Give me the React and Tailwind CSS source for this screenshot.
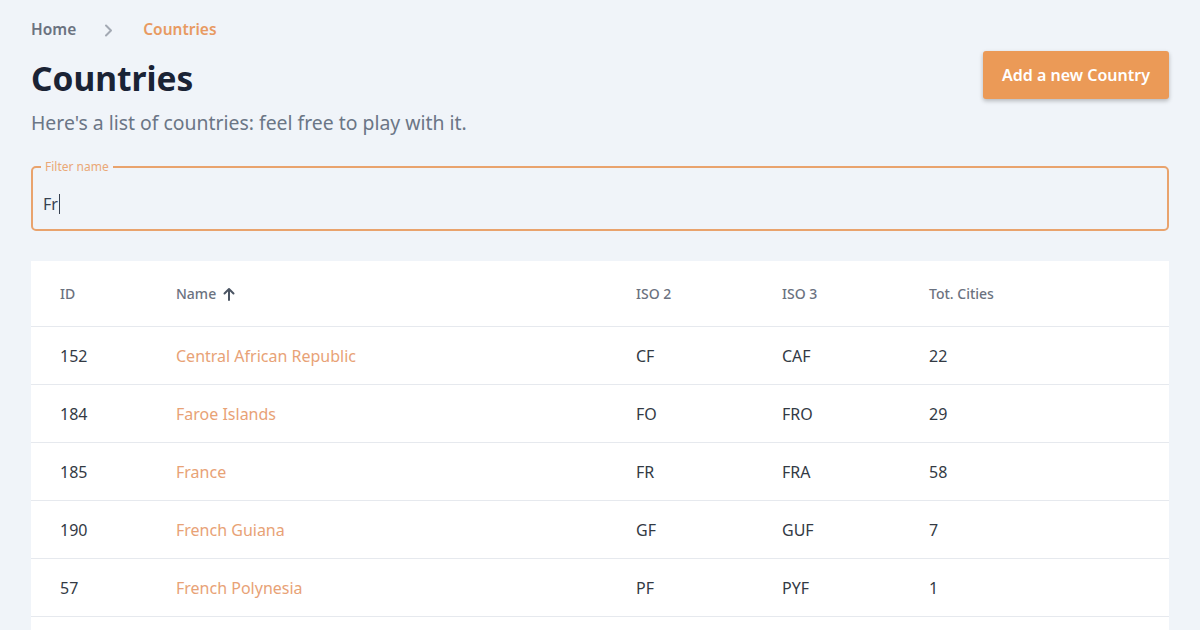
import React from "react";

const rows = [
  ["152", "Central African Republic", "CF", "CAF", "22"],
  ["184", "Faroe Islands", "FO", "FRO", "29"],
  ["185", "France", "FR", "FRA", "58"],
  ["190", "French Guiana", "GF", "GUF", "7"],
  ["57", "French Polynesia", "PF", "PYF", "1"],
  ["", "", "", "", ""],
];

export default function App() {
  return (
    <div
      className="w-[1200px] h-[630px] overflow-hidden bg-[#f0f4f9] px-[31px] pt-[18px]"
      style={{ fontFamily: '"Noto Sans", "Open Sans", sans-serif' }}
    >
      <div className="flex items-center text-[15.5px] font-semibold h-[24px]">
        <span className="text-[#6b7280]">Home</span>
        <svg className="ml-[27px] mr-[29px]" width="11" height="15" viewBox="0 0 11 15" fill="none">
          <path d="M3 2.5 L8 7.5 L3 12.5" stroke="#a3a9b3" strokeWidth="2" strokeLinecap="round" strokeLinejoin="round" />
        </svg>
        <span className="text-[#e89a62]">Countries</span>
      </div>

      <div className="flex items-start justify-between">
        <div>
          <h1 className="mt-[14px] text-[33.5px] font-bold text-[#1a2335] leading-[44px]">Countries</h1>
          <p className="text-[19.4px] text-[#6b7686] mt-[10px] leading-[26px]">
            Here's a list of countries: feel free to play with it.
          </p>
        </div>
        <button className="mt-[9px] h-[48px] w-[186px] rounded-[3px] bg-[#eb9a57] text-white text-[16px] font-semibold shadow-[0_2px_4px_rgba(0,0,0,0.25)]">
          Add a new Country
        </button>
      </div>

      <fieldset className="mt-[24px] h-[71px] rounded-[5px] border-2 border-[#e9a36d] px-[8px] pb-0">
        <legend className="text-[12px] text-[#eaa877] px-[4px] leading-[14px]">Filter name</legend>
        <div className="mt-[18px] pl-[2px] flex items-center text-[16px] text-[#374151] leading-[24px]">
          <span>Fr</span>
          <span className="inline-block w-[1px] h-[20px] bg-[#374151] ml-[1px]" />
        </div>
      </fieldset>

      <div className="mt-[30px] bg-white">
        <div className="grid grid-cols-[116px_460px_146px_147px_1fr] px-[29px] h-[66px] items-center border-b border-[#e6e9ee] text-[14px] font-medium text-[#6b7280]">
          <div>ID</div>
          <div className="flex items-center gap-[7px]">
            Name
            <svg width="12" height="14" viewBox="0 0 12 14" fill="none">
              <path d="M6 13 V2 M1.5 6.5 L6 2 L10.5 6.5" stroke="#4b5563" strokeWidth="2" strokeLinecap="round" strokeLinejoin="round" />
            </svg>
          </div>
          <div>ISO 2</div>
          <div>ISO 3</div>
          <div>Tot. Cities</div>
        </div>
        {rows.map((r, i) => (
          <div
            key={i}
            className="grid grid-cols-[116px_460px_146px_147px_1fr] px-[29px] h-[58px] items-center border-b border-[#e6e9ee] text-[16px] text-[#333a44]"
          >
            <div>{r[0]}</div>
            <div className="text-[#e8a276]">{r[1]}</div>
            <div>{r[2]}</div>
            <div>{r[3]}</div>
            <div>{r[4]}</div>
          </div>
        ))}
      </div>
    </div>
  );
}
